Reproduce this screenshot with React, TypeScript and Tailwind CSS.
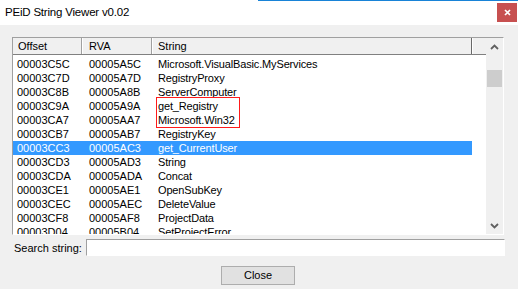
import React from "react";

const rows: [string, string, string][] = [
  ["00003C5C", "00005A5C", "Microsoft.VisualBasic.MyServices"],
  ["00003C7D", "00005A7D", "RegistryProxy"],
  ["00003C8B", "00005A8B", "ServerComputer"],
  ["00003C9A", "00005A9A", "get_Registry"],
  ["00003CA7", "00005AA7", "Microsoft.Win32"],
  ["00003CB7", "00005AB7", "RegistryKey"],
  ["00003CC3", "00005AC3", "get_CurrentUser"],
  ["00003CD3", "00005AD3", "String"],
  ["00003CDA", "00005ADA", "Concat"],
  ["00003CE1", "00005AE1", "OpenSubKey"],
  ["00003CEC", "00005AEC", "DeleteValue"],
  ["00003CF8", "00005AF8", "ProjectData"],
  ["00003D04", "00005B04", "SetProjectError"],
];

const font = { fontFamily: '"Liberation Sans", Arial, sans-serif' };

export default function App() {
  return (
    <div
      className="w-[518px] h-[289px] bg-[#f0f0f0] overflow-hidden relative text-black"
      style={font}
    >
      {/* title bar */}
      <div className="h-[25px] bg-white flex items-start relative">
        <div className="absolute top-0 left-[258px] right-0 h-[1px] bg-[#1883d7]" />
        <span className="pl-[5px] pt-[5px] text-[11.5px] leading-[14px] tracking-[-0.2px]">
          PEiD String Viewer v0.02
        </span>
        <div className="ml-auto mt-[3px] mr-[1px] w-[20px] h-[19px] bg-[#c75050] flex items-center justify-center">
          <svg width="7" height="7" viewBox="0 0 7 7">
            <path d="M1 1 L6 6 M6 1 L1 6" stroke="white" strokeWidth="1.7" />
          </svg>
        </div>
      </div>

      {/* body */}
      <div className="pl-[12px] pt-[12px] flex flex-col">
        {/* list box */}
        <div className="relative w-[492px] h-[198px] border border-[#a0a0a0] border-r-white border-b-white bg-white flex overflow-hidden">
          <div className="w-[473px] flex flex-col">
            {/* header */}
            <div className="h-[17px] flex bg-[#f0f0f0] border-b border-[#808080] text-[11px] leading-[16px]">
              <div className="w-[69px] pl-[5px] border-r border-[#a0a0a0]">Offset</div>
              <div className="w-[70px] pl-[6px] border-r border-[#a0a0a0] border-l border-l-white">RVA</div>
              <div className="w-[320px] pl-[5px] border-r border-[#696969] border-l border-l-white">String</div>
              <div className="flex-1 border-l border-l-white" />
            </div>
            <div className="pt-[2px] flex flex-col">
              {rows.map((r, i) => {
                const sel = i === 6;
                return (
                  <div
                    key={r[0]}
                    className={
                      "h-[14px] flex text-[11px] leading-[14px] w-[459px] " +
                      (sel ? "bg-[#3399ff] text-white" : "")
                    }
                  >
                    <div className="w-[69px] pl-[4px] whitespace-nowrap">{r[0]}</div>
                    <div className="w-[70px] pl-[7px] whitespace-nowrap">{r[1]}</div>
                    <div className="w-[320px] pl-[6px] whitespace-nowrap tracking-[-0.15px]">{r[2]}</div>
                  </div>
                );
              })}
            </div>
          </div>
          {/* scrollbar */}
          <div className="w-[17px] h-full bg-[#f0f0f0] flex flex-col items-center">
            <div className="h-[17px] w-full flex items-center justify-center">
              <svg width="9" height="6" viewBox="0 0 9 6">
                <path d="M1 5 L4.5 1.5 L8 5" stroke="#606060" strokeWidth="1.8" fill="none" />
              </svg>
            </div>
            <div className="mt-[15px] w-[15px] h-[17px] bg-[#cdcdcd]" />
            <div className="flex-1" />
            <div className="h-[17px] w-full flex items-center justify-center">
              <svg width="9" height="6" viewBox="0 0 9 6">
                <path d="M1 1 L4.5 4.5 L8 1" stroke="#606060" strokeWidth="1.8" fill="none" />
              </svg>
            </div>
          </div>
          {/* red annotation box */}
          <div className="absolute left-[143px] top-[59px] w-[84px] h-[31px] border border-[#ff1a1a]" />
        </div>

        {/* search row */}
        <div className="flex items-center mt-[4px] h-[17px]">
          <span className="pl-[2px] w-[74px] text-[11px] leading-[14px] whitespace-nowrap">
            Search string:
          </span>
          <div className="w-[419px] h-[17px] bg-white border border-[#a0a0a0] border-r-white border-b-white" />
        </div>

        {/* close button */}
        <div className="flex mt-[10px] pl-[209px]">
          <div className="w-[74px] h-[19px] bg-[#e1e1e1] border border-[#adadad] flex items-center justify-center text-[11px]">
            Close
          </div>
        </div>
      </div>
    </div>
  );
}
